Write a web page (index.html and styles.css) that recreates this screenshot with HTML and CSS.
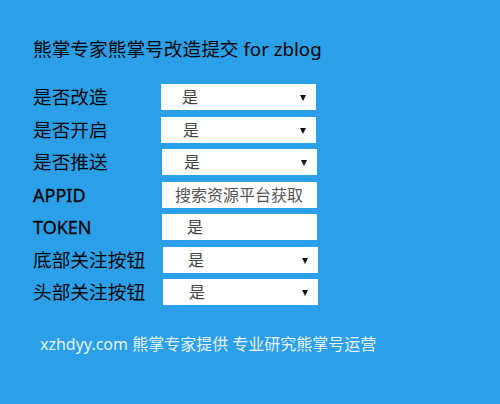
FILE: index.html
```html
<!DOCTYPE html>
<html lang="zh-CN">
<head>
<meta charset="utf-8">
<title>熊掌专家熊掌号改造提交 for zblog</title>
<link rel="stylesheet" href="styles.css">
</head>
<body>
<div class="page">
  <h1 class="title">熊掌专家熊掌号改造提交 for zblog</h1>
  <div class="form">
    <div class="row"><span class="label">是否改造</span><div class="field select">是</div></div>
    <div class="row"><span class="label">是否开启</span><div class="field select p23">是</div></div>
    <div class="row r3"><span class="label">是否推送</span><div class="field select p23">是</div></div>
    <div class="row r3"><span class="label latin">APPID</span><div class="field input ph">搜索资源平台获取</div></div>
    <div class="row r3"><span class="label latin">TOKEN</span><div class="field input p25">是</div></div>
    <div class="row r4"><span class="label">底部关注按钮</span><div class="field select p25">是</div></div>
    <div class="row r4"><span class="label">头部关注按钮</span><div class="field select p26">是</div></div>
  </div>
  <p class="footer">xzhdyy.com 熊掌专家提供 专业研究熊掌号运营</p>
</div>
</body>
</html>
```

FILE: styles.css
```css
html, body {
  margin: 0;
  padding: 0;
  background: #2b9fe8;
  height: 100%;
}
body {
  font-family: "Noto Sans", "Noto Sans CJK SC", sans-serif;
  color: #050505;
}
.page {
  padding: 37px 0 0 33px;
}
.title {
  margin: 0 0 23px 0;
  font-size: 18.7px;
  font-weight: normal;
  line-height: 24px;
  height: 24px;
  white-space: nowrap;
}
.form {
  display: flex;
  flex-direction: column;
  gap: 6.5px;
}
.row {
  display: flex;
  align-items: center;
  height: 26px;
}
.label {
  width: 128px;
  flex: none;
  font-size: 18.7px;
  line-height: 26px;
  white-space: nowrap;
}
.latin {
  font-size: 18px;
  -webkit-text-stroke: 0.3px #050505;
}
.r3 .label { width: 129px; }
.r4 .label { width: 130px; }
.field {
  position: relative;
  box-sizing: border-box;
  width: 155px;
  height: 26px;
  background: #fff;
  padding-left: 21px;
  font-size: 16px;
  line-height: 26px;
  color: #444;
  white-space: nowrap;
  overflow: hidden;
}
.p23 { padding-left: 22px; }
.p25 { padding-left: 25px; }
.p26 { padding-left: 26px; }
.ph {
  padding-left: 13px;
  color: #555;
}
.select::after {
  content: "";
  position: absolute;
  right: 10px;
  top: 11px;
  border-left: 3px solid transparent;
  border-right: 3px solid transparent;
  border-top: 6px solid #111;
}
.footer {
  margin: 29px 0 0 7px;
  font-size: 16px;
  line-height: 20px;
  color: #e6f3fd;
  white-space: nowrap;
}
```
